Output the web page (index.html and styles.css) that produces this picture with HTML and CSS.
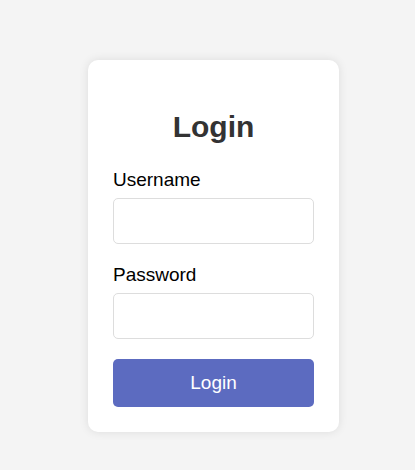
FILE: index.html
```html
<!DOCTYPE html>
<html lang="en">
<head>
    <meta charset="UTF-8">
    <meta name="viewport" content="width=device-width, initial-scale=1.0">
    <title>Login</title>
    <link rel="stylesheet" href="styles.css">
</head>
<body>

    <div id="page">
        <form id="login-card">
            <h2 class="card-title">Login</h2>

            <label for="username" class="field-label">Username</label>
            <input type="text" id="username" class="field-input">

            <label for="password" class="field-label">Password</label>
            <input type="password" id="password" class="field-input">

            <button type="submit" id="login-button">Login</button>
        </form>
    </div>

</body>
</html>
```

FILE: styles.css
```css
* {
    box-sizing: border-box;
}

body, html {
    font-family: "Liberation Sans", Arial, sans-serif;
    margin: 0;
    height: 100%;
    background-color: #f4f4f4;
}

#page {
    display: flex;
    justify-content: flex-start;
    align-items: flex-start;
    padding: 60px 0 0 88px;
}

#login-card {
    width: 251px;
    background-color: #ffffff;
    border-radius: 10px;
    box-shadow: 0 0 10px rgba(0, 0, 0, 0.1);
    padding: 25px;
    display: flex;
    flex-direction: column;
}

.card-title {
    font-size: 30px;
    line-height: 32px;
    font-weight: bold;
    color: #333;
    text-align: center;
    margin: 26px 0 26px 0;
}

.field-label {
    font-size: 19px;
    line-height: 22px;
    color: #000;
    margin-bottom: 7px;
}

.field-input {
    width: 100%;
    height: 46px;
    border: 1px solid #dddddd;
    border-radius: 5px;
    padding: 10px;
    font-size: 16px;
    margin: 0 0 20px 0;
    background-color: #ffffff;
}

.field-input:focus {
    outline: none;
}

#login-button {
    width: 100%;
    height: 48px;
    border: none;
    border-radius: 5px;
    background-color: #5c6bc0;
    color: #ffffff;
    font-family: "Liberation Sans", Arial, sans-serif;
    font-size: 19px;
    cursor: pointer;
}
```
